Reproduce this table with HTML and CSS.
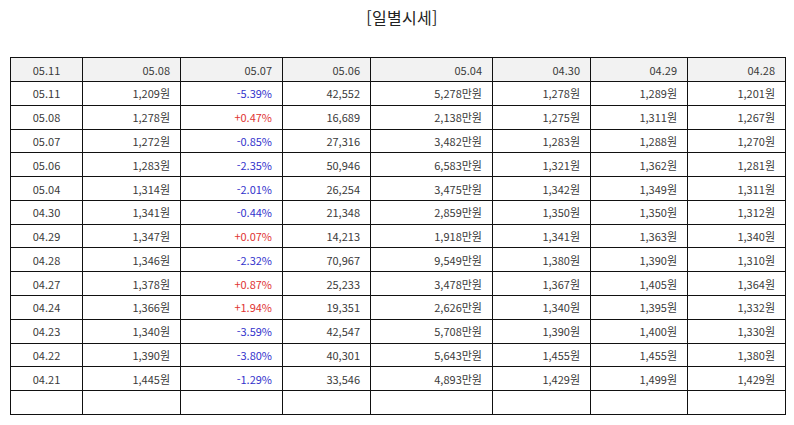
FILE: index.html
```html
<!DOCTYPE html>
<html lang="ko">
<head>
<meta charset="utf-8">
<title>일별시세</title>
<link rel="stylesheet" href="styles.css">
</head>
<body>
<div class="page">
  <h2 class="title">[일별시세]</h2>
  <table class="daily">
    <colgroup>
      <col class="c1"><col class="c2"><col class="c3"><col class="c4"><col class="c5"><col class="c6"><col class="c7"><col class="c8">
    </colgroup>
    <thead>
      <tr><th>05.11</th><th>05.08</th><th>05.07</th><th>05.06</th><th>05.04</th><th>04.30</th><th>04.29</th><th>04.28</th></tr>
    </thead>
    <tbody>
      <tr><td>05.11</td><td>1,209원</td><td class="dn">-5.39%</td><td>42,552</td><td>5,278만원</td><td>1,278원</td><td>1,289원</td><td>1,201원</td></tr>
      <tr><td>05.08</td><td>1,278원</td><td class="up">+0.47%</td><td>16,689</td><td>2,138만원</td><td>1,275원</td><td>1,311원</td><td>1,267원</td></tr>
      <tr><td>05.07</td><td>1,272원</td><td class="dn">-0.85%</td><td>27,316</td><td>3,482만원</td><td>1,283원</td><td>1,288원</td><td>1,270원</td></tr>
      <tr><td>05.06</td><td>1,283원</td><td class="dn">-2.35%</td><td>50,946</td><td>6,583만원</td><td>1,321원</td><td>1,362원</td><td>1,281원</td></tr>
      <tr><td>05.04</td><td>1,314원</td><td class="dn">-2.01%</td><td>26,254</td><td>3,475만원</td><td>1,342원</td><td>1,349원</td><td>1,311원</td></tr>
      <tr><td>04.30</td><td>1,341원</td><td class="dn">-0.44%</td><td>21,348</td><td>2,859만원</td><td>1,350원</td><td>1,350원</td><td>1,312원</td></tr>
      <tr><td>04.29</td><td>1,347원</td><td class="up">+0.07%</td><td>14,213</td><td>1,918만원</td><td>1,341원</td><td>1,363원</td><td>1,340원</td></tr>
      <tr><td>04.28</td><td>1,346원</td><td class="dn">-2.32%</td><td>70,967</td><td>9,549만원</td><td>1,380원</td><td>1,390원</td><td>1,310원</td></tr>
      <tr><td>04.27</td><td>1,378원</td><td class="up">+0.87%</td><td>25,233</td><td>3,478만원</td><td>1,367원</td><td>1,405원</td><td>1,364원</td></tr>
      <tr><td>04.24</td><td>1,366원</td><td class="up">+1.94%</td><td>19,351</td><td>2,626만원</td><td>1,340원</td><td>1,395원</td><td>1,332원</td></tr>
      <tr><td>04.23</td><td>1,340원</td><td class="dn">-3.59%</td><td>42,547</td><td>5,708만원</td><td>1,390원</td><td>1,400원</td><td>1,330원</td></tr>
      <tr><td>04.22</td><td>1,390원</td><td class="dn">-3.80%</td><td>40,301</td><td>5,643만원</td><td>1,455원</td><td>1,455원</td><td>1,380원</td></tr>
      <tr><td>04.21</td><td>1,445원</td><td class="dn">-1.29%</td><td>33,546</td><td>4,893만원</td><td>1,429원</td><td>1,499원</td><td>1,429원</td></tr>
      <tr><td></td><td></td><td></td><td></td><td></td><td></td><td></td><td></td></tr>
    </tbody>
  </table>
</div>
</body>
</html>
```

FILE: styles.css
```css
html, body {
  margin: 0;
  padding: 0;
  background: #ffffff;
}

.page {
  width: 794px;
  padding: 0 0 0 10px;
  box-sizing: border-box;
  font-family: "Noto Sans CJK KR", "Noto Sans", "DejaVu Sans", sans-serif;
  color: #3a3a3a;
}

.title {
  margin: 0;
  height: 57px;
  padding-top: 5px;
  box-sizing: border-box;
  font-size: 16px;
  font-weight: normal;
  line-height: 24px;
  text-align: center;
  color: #222222;
  letter-spacing: 0.3px;
}

.daily {
  width: 775px;
  height: 358px;
  border-collapse: collapse;
  table-layout: fixed;
  font-size: 11px;
}

.c1 { width: 72px; }
.c2 { width: 98px; }
.c3 { width: 102px; }
.c4 { width: 88px; }
.c5 { width: 122px; }
.c6 { width: 98px; }
.c7 { width: 97px; }
.c8 { width: 98px; }

.daily th,
.daily td {
  border: 1px solid #111111;
  height: 20px;
  padding: 0 10px 0 4px;
  box-sizing: border-box;
  text-align: right;
  font-weight: normal;
  line-height: 14px;
  white-space: nowrap;
}

.daily th {
  height: 24px;
  background: #f2f2f2;
}

.daily th:first-child,
.daily td:first-child {
  text-align: center;
  padding: 0;
}

.daily .dn { color: #3333cc; }
.daily .up { color: #e03333; }
```
